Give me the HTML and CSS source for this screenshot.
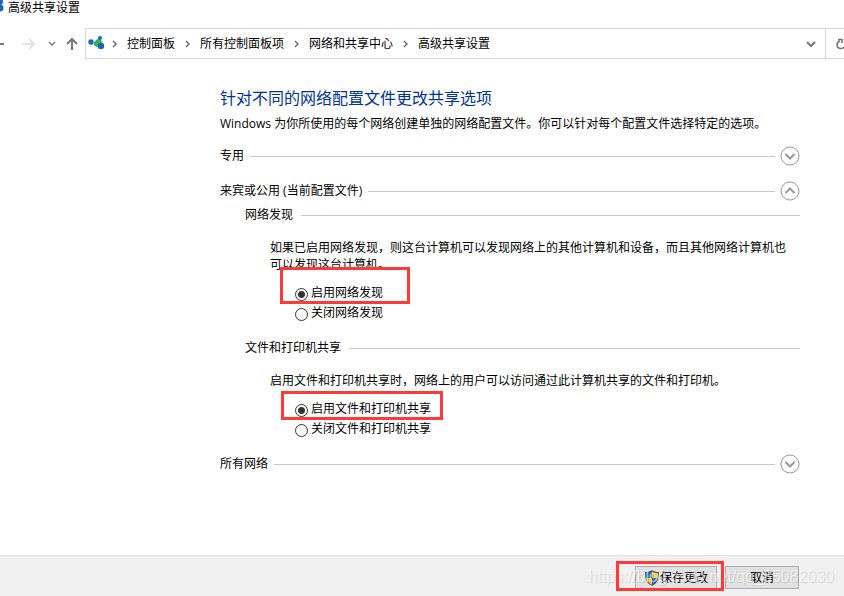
FILE: index.html
```html
<!DOCTYPE html>
<html lang="zh-CN">
<head>
    <meta charset="utf-8">
    <meta name="viewport" content="width=device-width, initial-scale=1.0">
    <title>高级共享设置</title>
    <link rel="stylesheet" href="styles.css">
</head>
<body>
    <div class="titlebar">
        <svg width="4" height="14" viewBox="0 0 4 14"><circle cx="0" cy="2" r="3" fill="#1c66b5"/><circle cx="0" cy="8" r="3.500" fill="#1c66b5"/></svg>
        <span>高级共享设置</span>
    </div>
    <nav class="navbar">
        <button class="nav-btn back" aria-label="后退"><svg width="5" height="14" viewBox="0 0 5 14"><path d="M0 7h4" stroke="#777" stroke-width="2"/></svg></button>
        <button class="nav-btn forward" aria-label="前进"><svg width="14" height="14" viewBox="0 0 14 14"><path d="M0 7h12M7 2l5 5-5 5" fill="none" stroke="#ddd" stroke-width="1.600"/></svg></button>
        <button class="nav-btn recent" aria-label="最近浏览的位置"><svg width="8" height="14" viewBox="0 0 8 14"><path d="M1 5l3 3 3-3" fill="none" stroke="#888" stroke-width="1.600"/></svg></button>
        <button class="nav-btn up" aria-label="向上"><svg width="14" height="14" viewBox="0 0 14 14"><path d="M7 13V2M2 7l5-5 5 5" fill="none" stroke="#777" stroke-width="2"/></svg></button>
        <div class="address">
            <svg class="share-icon" width="18" height="16" viewBox="0 0 18 16"><circle cx="3" cy="6" r="2.700" fill="#1c66b5"/><path d="M6 6.500c1-1.500 2-3 4-3.500 3 0 4 2 4 4s-1.500 4-4 4c-2.500 0-5-2-4-4.500z" fill="#2fb457"/><circle cx="12" cy="2" r="2" fill="#1c66b5"/><circle cx="13" cy="10" r="3.200" fill="#1c66b5"/></svg>
            <svg class="sep" width="7" height="8" viewBox="0 0 7 8"><path d="M2 1l3 3-3 3" /></svg>
            <a href="#">控制面板</a>
            <svg class="sep" width="7" height="8" viewBox="0 0 7 8"><path d="M2 1l3 3-3 3" /></svg>
            <a href="#">所有控制面板项</a>
            <svg class="sep" width="7" height="8" viewBox="0 0 7 8"><path d="M2 1l3 3-3 3" /></svg>
            <a href="#">网络和共享中心</a>
            <svg class="sep" width="7" height="8" viewBox="0 0 7 8"><path d="M2 1l3 3-3 3" /></svg>
            <a href="#">高级共享设置</a>
            <button class="nav-btn history" aria-label="以前的位置"><svg width="10" height="8" viewBox="0 0 10 8"><path d="M1 2l4 4 4-4" fill="none" stroke="#777" stroke-width="2"/></svg></button>
        </div>
        <button class="nav-btn refresh" aria-label="刷新"><svg width="8" height="12" viewBox="0 0 8 12"><path d="M4 3C0 4 0 10.500 5 10.500c1.500 0 2.500-.5 3-1.500M2 1.500h4V5" fill="none" stroke="#777" stroke-width="1.600"/></svg></button>
    </nav>

    <main class="content">
        <h1>针对不同的网络配置文件更改共享选项</h1>
        <p class="intro">Windows 为你所使用的每个网络创建单独的网络配置文件。你可以针对每个配置文件选择特定的选项。</p>

        <section class="profile">
            <h2 class="rule">专用</h2>
            <button class="toggle" aria-label="展开专用"><svg width="20" height="20" viewBox="0 0 20 20"><circle cx="10" cy="10" r="9"/><path d="M5.500 8l4.500 4.500L14.500 8"/></svg></button>
        </section>

        <section class="profile">
            <h2 class="rule">来宾或公用 (当前配置文件)</h2>
            <button class="toggle" aria-label="折叠来宾或公用"><svg width="20" height="20" viewBox="0 0 20 20"><circle cx="10" cy="10" r="9"/><path d="M5.500 12l4.500-4.500 4.500 4.500"/></svg></button>
        </section>
        <div class="settings">
            <h3 class="rule">网络发现</h3>
            <div class="setting">
                <p>如果已启用网络发现，则这台计算机可以发现网络上的其他计算机和设备，而且其他网络计算机也可以发现这台计算机。</p>
                <div class="choices">
                    <label><input type="radio" name="discovery" checked>启用网络发现</label>
                    <label><input type="radio" name="discovery">关闭网络发现</label>
                    <span class="mark mark-discovery"></span>
                </div>
            </div>
            <h3 class="rule">文件和打印机共享</h3>
            <div class="setting">
                <p>启用文件和打印机共享时，网络上的用户可以访问通过此计算机共享的文件和打印机。</p>
                <div class="choices">
                    <label><input type="radio" name="sharing" checked>启用文件和打印机共享</label>
                    <label><input type="radio" name="sharing">关闭文件和打印机共享</label>
                    <span class="mark mark-sharing"></span>
                </div>
            </div>
        </div>

        <section class="profile">
            <h2 class="rule">所有网络</h2>
            <button class="toggle" aria-label="展开所有网络"><svg width="20" height="20" viewBox="0 0 20 20"><circle cx="10" cy="10" r="9"/><path d="M5.500 8l4.500 4.500L14.500 8"/></svg></button>
        </section>
    </main>

    <footer class="footer">
        <button class="btn save">
            <svg width="16" height="16" viewBox="0 0 16 16"><path d="M8 0c2 1.500 4 2 7 2 0 6-1 11-7 14C2 13 1 8 1 2c3 0 5-.5 7-2z" fill="#555"/><path d="M8 1.500V8H2.200C2 6.500 2 5 2 3c2.500 0 4.300-.5 6-1.500z" fill="#1b75d0"/><path d="M8 1.500c1.700 1 3.500 1.500 6 1.500 0 2 0 3.500-.2 5H8z" fill="#fdc52e"/><path d="M2.200 8H8v6.800C4.500 13 2.800 11 2.200 8z" fill="#fdc52e"/><path d="M8 8h5.800c-.6 3-2.300 5-5.800 6.800z" fill="#1b75d0"/></svg>
            保存更改
        </button>
        <button class="btn">取消</button>
        <span class="watermark">https://blog.csdn.net/qq_35082030</span>
        <span class="mark mark-save"></span>
    </footer>
</body>
</html>
```
FILE: styles.css
```css
* {
    box-sizing: border-box;
}
body {
    margin: 0;
    min-height: 100vh;
    display: flex;
    flex-direction: column;
    background-color: white;
    color: black;
    font-family: "Open Sans", "Noto Sans CJK SC", sans-serif;
    font-size: 12px;
    line-height: 16px;
}
h1, h2, h3, p {
    margin: 0;
    font-size: 12px;
    font-weight: normal;
}
svg {
    display: block;
    flex: none;
}
button {
    font: inherit;
    color: inherit;
}
.titlebar {
    display: flex;
    gap: 4px;
    height: 16px;
}

/* navigation */
.navbar {
    display: flex;
    align-items: center;
    margin-top: 12px;
}
.nav-btn {
    padding: 0;
    border: none;
    background: none;
}
.forward {
    margin-left: 17px;
}
.recent {
    margin-left: 12px;
}
.up {
    margin-left: 9px;
}
.address {
    flex: 1;
    display: flex;
    align-items: center;
    height: 31px;
    margin-left: 6px;
    padding: 0 9px 0 2px;
    border: 1px solid #d9d9d9;
}
.address a {
    color: black;
    text-decoration: none;
}
.sep {
    margin: 0 9px;
    fill: none;
    stroke: #666;
    stroke-width: 1.4px;
}
.share-icon + .sep {
    margin-left: 5px;
}
.history {
    margin-left: auto;
}
.refresh {
    display: flex;
    justify-content: flex-end;
    align-items: center;
    width: 18px;
    height: 31px;
    border-top: 1px solid #d9d9d9;
    border-bottom: 1px solid #d9d9d9;
}

/* page */
.content {
    flex: 1;
    margin-left: 220px;
    margin-right: 44px;
    padding-top: 27px;
}
h1 {
    font-size: 16px;
    line-height: 24px;
    color: #003399;
}
.intro {
    margin-top: 6px;
}
.profile {
    display: flex;
    align-items: center;
    gap: 5px;
    margin-top: 15px;
}
.intro + .profile {
    margin-top: 14px;
}
.profile .rule {
    flex: 1;
}
.rule {
    display: flex;
    align-items: center;
}
.rule::after {
    content: "";
    flex: 1;
    height: 1px;
    margin-left: 6px;
    background-color: #c8c8c8;
}
h3.rule::after {
    margin-left: 8px;
}
.toggle {
    padding: 0;
    border: none;
    background: none;
}
.toggle svg {
    fill: none;
    stroke: #999;
}
.toggle path {
    stroke-width: 2px;
}
.settings {
    margin-left: 25px;
    padding-top: 6px;
}
.setting {
    margin-left: 25px;
    padding: 16px 12px 17px 0;
    line-height: 17px;
}
.setting:last-child {
    padding-bottom: 0;
}
.choices {
    position: relative;
    display: flex;
    flex-direction: column;
    align-items: flex-start;
    margin-top: 10px;
    padding-left: 25px;
}
.choices label {
    display: flex;
    align-items: center;
    gap: 3px;
    line-height: 20px;
}
.choices input {
    appearance: none;
    width: 13px;
    height: 13px;
    margin: 2px 0 0;
    border: 1px solid #333;
    border-radius: 50%;
}
.choices input:checked {
    background: radial-gradient(circle, #333 3px, white 4px);
}

/* red highlight frames */
.mark {
    position: absolute;
    border: 3px solid #ff3838;
    pointer-events: none;
}
.mark-discovery {
    left: 10px;
    top: -16px;
    width: 130px;
    height: 37px;
}
.mark-sharing {
    left: 11px;
    top: -8px;
    width: 162px;
    height: 29px;
}
.mark-save {
    right: 120px;
    top: 5px;
    width: 108px;
    height: 30px;
}

.footer {
    position: relative;
    display: flex;
    justify-content: flex-end;
    gap: 8px;
    padding: 10px 45px 7px;
    border-top: 1px solid #dfdfdf;
    background-color: #f0f0f0;
}
.btn {
    display: flex;
    justify-content: center;
    align-items: center;
    width: 74px;
    height: 23px;
    padding: 0;
    border: 1px solid #adadad;
    background-color: #e1e1e1;
}
.save {
    width: 82px;
}
.watermark {
    position: absolute;
    right: 10px;
    top: 11px;
    font-family: "Liberation Sans", sans-serif;
    font-size: 16px;
    line-height: 20px;
    color: rgba(255, 255, 255, 0.6);
    text-shadow: 1px 1px 1px rgba(0, 0, 0, 0.12);
    pointer-events: none;
}
```
